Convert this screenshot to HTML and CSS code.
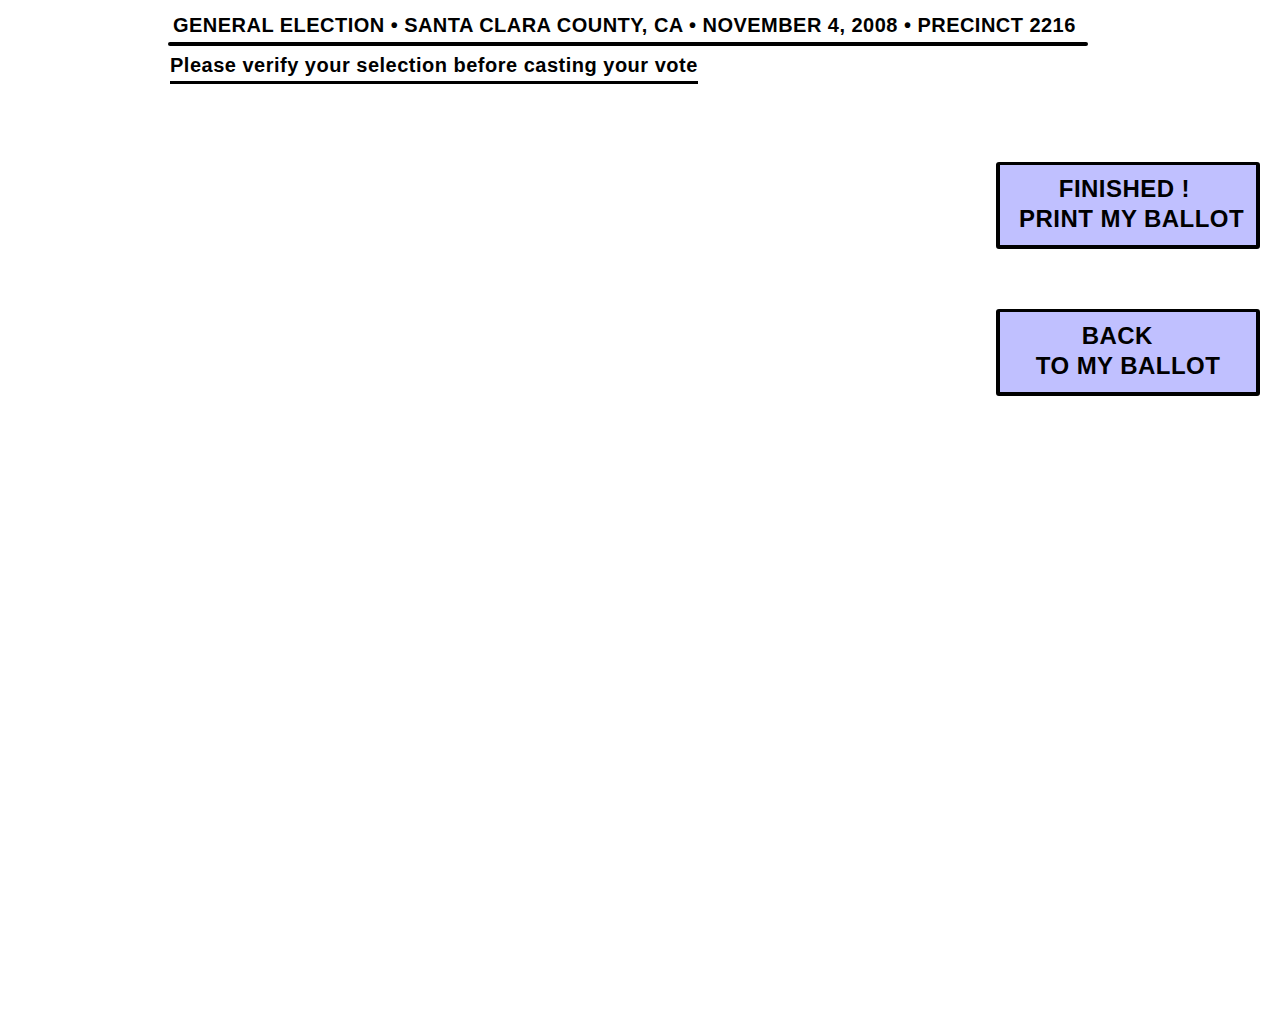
FILE: index.html
```html
<!DOCTYPE html>
<html>
<head>
<meta charset="utf-8">
<title>Verify Ballot</title>
<link rel="stylesheet" href="styles.css">
</head>
<body>
<div class="page">
  <header class="masthead">
    <h1 class="title">GENERAL ELECTION • SANTA CLARA COUNTY, CA • NOVEMBER 4, 2008 • PRECINCT 2216</h1>
    <div class="rule"></div>
    <h2 class="subtitle">Please verify your selection before casting your vote</h2>
  </header>
  <div class="actions">
    <button class="btn btn-finish"><span class="line">FINISHED ! </span><span class="line"> PRINT MY BALLOT</span></button>
    <button class="btn btn-back"><span class="line">BACK   </span><span class="line">TO MY BALLOT</span></button>
  </div>
</div>
</body>
</html>
```

FILE: styles.css
```css
html, body {
  margin: 0;
  padding: 0;
  background: #ffffff;
}

body {
  font-family: "Liberation Sans", Arial, sans-serif;
  font-weight: bold;
  color: #000;
  width: 1280px;
  height: 1024px;
}

.page {
  display: flex;
  flex-direction: column;
}

.masthead {
  padding: 13px 0 0 168px;
  display: flex;
  flex-direction: column;
  align-items: flex-start;
}

.title {
  margin: 0;
  padding-left: 5px;
  font-size: 20px;
  letter-spacing: 0.47px;
  line-height: 24px;
  font-weight: bold;
  white-space: nowrap;
}

.rule {
  margin-top: 5px;
  width: 920px;
  height: 4px;
  background: #000;
  border-radius: 2px;
}

.subtitle {
  margin: 8px 0 0 2px;
  font-size: 20px;
  letter-spacing: 0.5px;
  line-height: 23px;
  font-weight: bold;
  padding-bottom: 4px;
  border-bottom: 3px solid #000;
  white-space: nowrap;
}

.actions {
  margin-top: 78px;
  padding-right: 20px;
  display: flex;
  flex-direction: column;
  align-items: flex-end;
  gap: 60px;
}

.btn {
  box-sizing: border-box;
  width: 264px;
  height: 87px;
  margin: 0;
  padding: 0 0 2px 0;
  background: #c0c0ff;
  border-style: solid;
  border-color: #000;
  border-width: 3px 4px 4px 4px;
  border-radius: 3px;
  font-family: "Liberation Sans", Arial, sans-serif;
  font-weight: bold;
  font-size: 24px;
  letter-spacing: 0.45px;
  line-height: 30px;
  color: #000;
  display: flex;
  flex-direction: column;
  align-items: center;
  justify-content: center;
  cursor: pointer;
}

.line {
  display: block;
  white-space: pre;
}
```
